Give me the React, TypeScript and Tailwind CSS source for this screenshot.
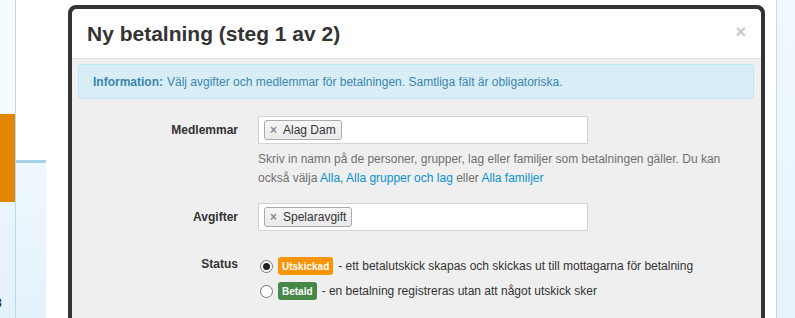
import React from "react";

function Tag({ label }: { label: string }) {
  return (
    <span className="flex h-[20px] items-center rounded-[3px] border border-[#aaa] bg-gradient-to-b from-[#f6f6f6] to-[#e9e9e9] pl-[5px] pr-[5px] text-[12px] text-[#333]">
      <span className="mr-[6px] text-[12px] font-bold leading-none text-[#8a8a8a]">×</span>
      {label}
    </span>
  );
}

function Radio({ checked }: { checked?: boolean }) {
  return (
    <span className="flex h-[13px] w-[13px] items-center justify-center rounded-full border border-[#777] bg-white">
      {checked && <span className="h-[7px] w-[7px] rounded-full bg-[#222]" />}
    </span>
  );
}

export default function App() {
  return (
    <div className="relative h-[318px] w-[795px] overflow-hidden bg-white font-['Liberation_Sans',Arial,sans-serif]">
      {/* page behind the dialog */}
      <div className="flex h-full">
        <div className="flex w-[16px] flex-col border-r border-[#b6dcef]">
          <div className="h-[114px] bg-[#f4fafd]" />
          <div className="h-[88px] bg-[#e08600]" />
          <div className="flex flex-1 items-end bg-gradient-to-b from-[#eaf5fc] to-[#e3f1fb] pb-[6px]">
            <span className="ml-[-5px] text-[12px] font-bold text-[#333]">8</span>
          </div>
        </div>
        <div className="flex w-[30px] flex-col">
          <div className="h-[160px] bg-white" />
          <div className="flex-1 border-t-[3px] border-[#a5d2e8] bg-gradient-to-b from-[#eef7fd] to-[#e4f2fb]" />
        </div>
        <div className="w-[730px] bg-white" />
        <div className="flex-1 border-l border-[#b9dcef] bg-gradient-to-b from-[#f0f8fe] to-[#e6f3fc]" />
      </div>

      {/* dialog */}
      <div className="absolute left-[68px] top-[5px] h-[340px] w-[697px] rounded-t-[8px] border-4 border-[#333] bg-[#333]">
        <div className="flex h-full flex-col overflow-hidden rounded-t-[5px] bg-[#efefef]">
          <div className="flex h-[50px] items-center justify-between border-b border-[#e5e5e5] bg-white pl-[15px] pr-[15px]">
            <h3 className="text-[21px] font-bold text-[#333]">Ny betalning (steg 1 av 2)</h3>
            <span className="mt-[-4px] text-[18px] font-bold leading-none text-[#c8c8c8]">×</span>
          </div>

          <div className="pl-[6px] pr-[7px] pt-[5px]">
            <div className="flex h-[35px] items-center rounded-[4px] border border-[#bce8f1] bg-[#d9edf7] pl-[14px] text-[12px] text-[#3a87ad]">
              <b className="mr-[4px]">Information:</b>
              Välj avgifter och medlemmar för betalningen. Samtliga fält är obligatoriska.
            </div>
          </div>

          <div className="mt-[17px] flex flex-col text-[12px] text-[#333]">
            <div className="flex">
              <div className="flex h-[28px] w-[166px] items-center justify-end font-bold">Medlemmar</div>
              <div className="ml-[20px] flex flex-col">
                <div className="flex h-[28px] w-[330px] items-center border border-[#d4d4d4] bg-white pl-[5px]">
                  <Tag label="Alag Dam" />
                </div>
                <p className="mt-[6px] leading-[19px] text-[#6f6f6f]">
                  Skriv in namn på de personer, grupper, lag eller familjer som betalningen gäller. Du kan
                  <br />
                  också välja <a className="text-[#0a8fd1]">Alla</a>,{" "}
                  <a className="text-[#0a8fd1]">Alla grupper och lag</a> eller{" "}
                  <a className="text-[#0a8fd1]">Alla familjer</a>
                </p>
              </div>
            </div>

            <div className="mt-[15px] flex">
              <div className="flex h-[28px] w-[166px] items-center justify-end font-bold">Avgifter</div>
              <div className="ml-[20px] flex h-[28px] w-[330px] items-center border border-[#d4d4d4] bg-white pl-[5px]">
                <Tag label="Spelaravgift" />
              </div>
            </div>

            <div className="mt-[25px] flex">
              <div className="mt-[-2px] flex h-[20px] w-[166px] items-center justify-end font-bold">Status</div>
              <div className="ml-[22px] flex flex-col gap-[5px]">
                <div className="flex h-[20px] items-center">
                  <Radio checked />
                  <span className="ml-[5px] mr-[5px] flex h-[18px] items-center rounded-[3px] bg-[#f89406] px-[4px] text-[10px] font-bold text-white">
                    Utskickad
                  </span>
                  - ett betalutskick skapas och skickas ut till mottagarna för betalning
                </div>
                <div className="flex h-[20px] items-center">
                  <Radio />
                  <span className="ml-[5px] mr-[5px] flex h-[18px] items-center rounded-[3px] bg-[#468847] px-[4px] text-[10px] font-bold text-white">
                    Betald
                  </span>
                  - en betalning registreras utan att något utskick sker
                </div>
              </div>
            </div>
          </div>
        </div>
      </div>
    </div>
  );
}
